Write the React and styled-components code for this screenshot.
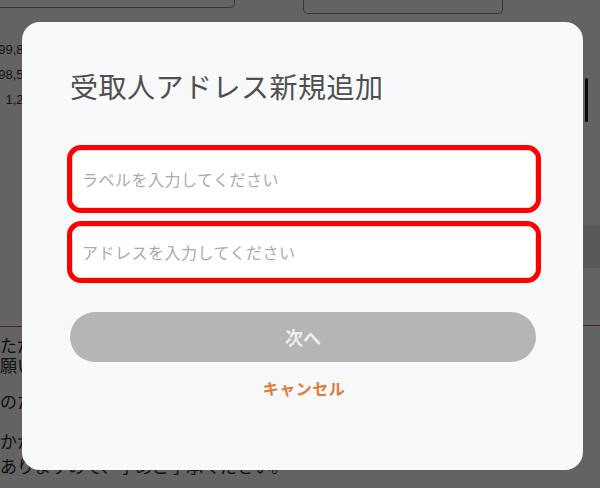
import styled, { createGlobalStyle } from 'styled-components';

const GlobalStyle = createGlobalStyle`
  html, body {
    margin: 0;
    padding: 0;
    overflow: hidden;
  }
  body {
    font-family: "Noto Sans CJK JP", "Noto Sans", sans-serif;
    background: #fff;
  }
  * {
    box-sizing: border-box;
  }
`;

const amounts = ['199,800', '198,500', '1,200'];

const notice = [
  { text: 'ただいまアクセスが集中しております。しばらく時間をおいてから再度お試しください。', gap: 0 },
  { text: '願いいたします。', gap: 0 },
  { text: 'のため、', gap: 16 },
  { text: 'かかる場合がございます。ご不便をおかけしますが、よろしくお願いします。', gap: 20 },
  { text: 'ありますので、予めご了承ください。', gap: 5 },
];

const App = () => {
  return (
    <>
      <GlobalStyle />
      <Page>
        <TopBar>
          <GhostButton $width={245} $height={8} $offset={-10} />
          <GhostButton $width={200} $height={14} $offset={68} />
        </TopBar>

        <Body>
          <Main>
            <AmountList>
              {amounts.map((amount) => (
                <AmountRow key={amount}>{amount}</AmountRow>
              ))}
            </AmountList>

            <Notice>
              {notice.map((line, index) => (
                <NoticeLine key={`notice-${index}`} $gap={line.gap}>
                  {line.text}
                </NoticeLine>
              ))}
            </Notice>
          </Main>

          <Rail>
            <ScrollThumb />
            <RailBand />
            <RailLine />
          </Rail>
        </Body>
      </Page>

      <Overlay>
        <Modal>
          <Title>受取人アドレス新規追加</Title>

          <Fields>
            <Highlight $height={68}>
              <Field placeholder="ラベルを入力してください" />
            </Highlight>
            <Highlight $height={62}>
              <Field placeholder="アドレスを入力してください" />
            </Highlight>
          </Fields>

          <NextButton type="button" disabled>
            次へ
          </NextButton>

          <CancelLink>キャンセル</CancelLink>
        </Modal>
      </Overlay>
    </>
  );
};

export default App;

const Page = styled.div`
  width: 600px;
  height: 488px;
  background: #fff;
  display: flex;
  flex-direction: column;
  overflow: hidden;
`;

const TopBar = styled.div`
  display: flex;
  align-items: flex-start;
  height: 14px;
  flex-shrink: 0;
`;

const GhostButton = styled.div`
  flex-shrink: 0;
  width: ${(p) => p.$width}px;
  height: ${(p) => p.$height}px;
  margin-left: ${(p) => p.$offset}px;
  border: 1px solid #8c8c8c;
  border-top: none;
  border-radius: 0 0 5px 5px;
  background: #fff;
`;

const Body = styled.div`
  flex: 1;
  display: grid;
  grid-template-columns: 1fr 17px;
`;

const Main = styled.div`
  display: flex;
  flex-direction: column;
  overflow: hidden;
`;

const AmountList = styled.div`
  display: flex;
  flex-direction: column;
  width: 58px;
  margin-left: -20px;
  padding-top: 23px;
`;

const AmountRow = styled.div`
  height: 25px;
  line-height: 25px;
  text-align: right;
  font-family: "Liberation Sans", sans-serif;
  font-size: 13px;
  color: #333;
  white-space: nowrap;
`;

const Notice = styled.div`
  margin-top: 214px;
  border-top: 1px solid #d2506e;
  padding-top: 8px;
  display: flex;
  flex-direction: column;
`;

const NoticeLine = styled.div`
  margin-top: ${(p) => p.$gap}px;
  font-size: 17px;
  line-height: 20px;
  color: #2a2a2a;
  white-space: nowrap;
`;

const Rail = styled.div`
  display: flex;
  flex-direction: column;
`;

const ScrollThumb = styled.div`
  width: 3px;
  height: 44px;
  margin: 64px 0 0 2px;
  background: #1a1a1a;
  border-radius: 2px;
`;

const RailBand = styled.div`
  height: 43px;
  margin-top: 103px;
  background: #e2e2e2;
`;

const RailLine = styled.div`
  height: 1px;
  margin-top: 57px;
  background: #d2506e;
`;

const Overlay = styled.div`
  position: fixed;
  inset: 0;
  background: rgba(0, 0, 0, 0.61);
  display: flex;
  align-items: flex-start;
  padding: 22px 0 0 22px;
`;

const Modal = styled.div`
  width: 561px;
  height: 448px;
  background: #f8f9fb;
  border-radius: 18px;
  padding: 45px 42px 0 45px;
  display: flex;
  flex-direction: column;
`;

const Title = styled.h2`
  margin: 0 0 0 3px;
  font-size: 28px;
  line-height: 38px;
  font-weight: 400;
  color: #4f4f4f;
  letter-spacing: 0.5px;
`;

const Fields = styled.div`
  margin-top: 40px;
  display: flex;
  flex-direction: column;
  gap: 8px;
`;

const Highlight = styled.div`
  height: ${(p) => p.$height}px;
  border: 5px solid #ff0000;
  border-radius: 14px;
  display: flex;
`;

const Field = styled.input`
  flex: 1;
  width: 100%;
  border: 1px solid #dcdcdc;
  border-radius: 9px;
  background: #fff;
  padding: 0 9px;
  font-family: "Noto Sans CJK JP", "Noto Sans", sans-serif;
  font-size: 16px;
  letter-spacing: 0.5px;
  color: #333;
  outline: none;

  &::placeholder {
    color: #ababab;
  }
`;

const NextButton = styled.button`
  margin: 29px 5px 0 3px;
  height: 50px;
  border: none;
  border-radius: 25px;
  background: #b5b5b5;
  color: #eeeeee;
  font-family: "Noto Sans CJK JP", "Noto Sans", sans-serif;
  font-size: 18px;
  font-weight: 700;
  cursor: default;
`;

const CancelLink = styled.div`
  margin-top: 14px;
  text-align: center;
  font-size: 16px;
  line-height: 24px;
  font-weight: 700;
  letter-spacing: 0.5px;
  color: #e27a38;
  cursor: pointer;
`;
